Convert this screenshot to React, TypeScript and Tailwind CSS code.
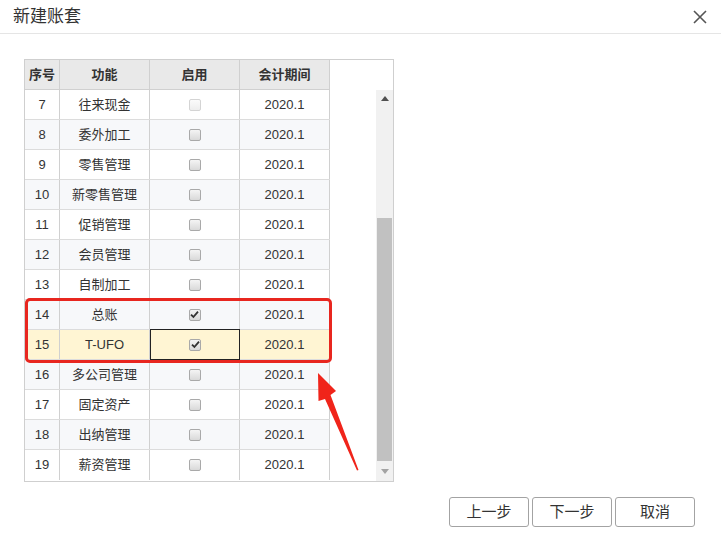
import React from 'react'

interface Row {
  no: number,
  name: string,
  checked: boolean,
  disabled?: boolean,
}

const rows: Row[] = [
  { no: 7, name: '往来现金', checked: false, disabled: true },
  { no: 8, name: '委外加工', checked: false },
  { no: 9, name: '零售管理', checked: false },
  { no: 10, name: '新零售管理', checked: false },
  { no: 11, name: '促销管理', checked: false },
  { no: 12, name: '会员管理', checked: false },
  { no: 13, name: '自制加工', checked: false },
  { no: 14, name: '总账', checked: true },
  { no: 15, name: 'T-UFO', checked: true },
  { no: 16, name: '多公司管理', checked: false },
  { no: 17, name: '固定资产', checked: false },
  { no: 18, name: '出纳管理', checked: false },
  { no: 19, name: '薪资管理', checked: false },
]

function Check(props: { checked: boolean, disabled?: boolean }) {
  return (
    <div
      className={`w-[12px] h-[12px] rounded-[2px] border flex items-center justify-center ${
        props.disabled
          ? 'border-[#d4d4d4] bg-gradient-to-b from-[#fbfbfb] to-[#eeeeee]'
          : 'border-[#a9a9a9] bg-gradient-to-b from-[#f4f4f4] to-[#d9d9d9]'
      }`}
    >
      {props.checked && (
        <svg width="9" height="9" viewBox="0 0 9 9">
          <path d="M1 4.6 L3.4 7 L8 1.6" fill="none" stroke="#333" strokeWidth="1.8" />
        </svg>
      )}
    </div>
  )
}

function App() {
  return (
    <div
      className="relative w-[721px] h-[558px] bg-white text-[#333] overflow-hidden"
      style={{ fontFamily: '"Liberation Sans", "Noto Sans CJK SC", sans-serif' }}
    >
      <div className="h-[34px] border-b border-[#e5e5e5] flex items-center justify-between pl-[13px] pr-[14px]">
        <span className="text-[17px] text-[#333] leading-none -mt-[1px]">新建账套</span>
        <svg width="14" height="14" viewBox="0 0 14 14">
          <path d="M1 1 L13 13 M13 1 L1 13" stroke="#555" strokeWidth="1.6" />
        </svg>
      </div>

      <div className="ml-[24px] mt-[25px] w-[370px] h-[423px] border border-[#cfcfcf] flex text-[13px]">
        <div className="w-[305px] flex flex-col">
          <div className="h-[30px] flex bg-[#e9e9e9] font-bold border-b border-[#d0d0d0]">
            <div className="w-[35px] flex items-center justify-center border-r border-[#d0d0d0]">序号</div>
            <div className="w-[90px] flex items-center justify-center border-r border-[#d0d0d0]">功能</div>
            <div className="w-[90px] flex items-center justify-center border-r border-[#d0d0d0]">启用</div>
            <div className="w-[90px] flex items-center justify-center border-r border-[#d0d0d0]">会计期间</div>
          </div>
          {rows.map((row, i) => {
            const current = row.no === 15
            const bg = current ? 'bg-[#fff5d3]' : i % 2 === 1 ? 'bg-[#f7f8fa]' : 'bg-white'
            return (
              <div key={row.no} className={`h-[30px] flex ${bg} ${i < rows.length - 1 ? 'border-b border-[#dcdcdc]' : ''}`}>
                <div className="w-[35px] flex items-center justify-center border-r border-[#d0d0d0]">{row.no}</div>
                <div className="w-[90px] flex items-center justify-center border-r border-[#d0d0d0]">{row.name}</div>
                <div
                  className={`w-[90px] flex items-center justify-center ${
                    current ? 'border border-[#222] -my-[1px] h-[31px]' : 'border-r border-[#d0d0d0]'
                  }`}
                >
                  <Check checked={row.checked} disabled={row.disabled} />
                </div>
                <div className="w-[90px] flex items-center justify-center border-r border-[#d0d0d0]">2020.1</div>
              </div>
            )
          })}
        </div>
        <div className="flex-1" />
        <div className="w-[17px] flex flex-col pt-[30px]">
          <div className="flex-1 bg-[#f1f1f1] flex flex-col">
            <div className="h-[17px] flex items-center justify-center">
              <svg width="8" height="5" viewBox="0 0 8 5"><path d="M0 5 L4 0 L8 5 Z" fill="#505050" /></svg>
            </div>
            <div className="h-[111px]" />
            <div className="h-[243px] mx-[1px] bg-[#c1c1c1]" />
            <div className="flex-1 flex items-center justify-center">
              <svg width="8" height="5" viewBox="0 0 8 5"><path d="M0 0 L4 5 L8 0 Z" fill="#a3a3a3" /></svg>
            </div>
          </div>
        </div>
      </div>

      <div className="mt-[15px] pr-[26px] flex justify-end gap-[3px]">
        {['上一步', '下一步', '取消'].map(label => (
          <button
            key={label}
            className="w-[80px] h-[30px] rounded-[3px] border border-[#a3a3a3] bg-white text-[15px] text-[#333] flex items-center justify-center"
          >
            {label}
          </button>
        ))}
      </div>

      <div className="absolute left-[25px] top-[298px] w-[307px] h-[65px] border-[3px] border-[#e8261f] rounded-[5px] pointer-events-none" />

      <svg className="absolute left-0 top-0 pointer-events-none" width="721" height="558">
        <polygon
          points="318,373 336,391 330.5,395 358.5,470 357,470.5 325,399 318.5,401"
          fill="#f0241a"
        />
      </svg>
    </div>
  )
}

export default App
